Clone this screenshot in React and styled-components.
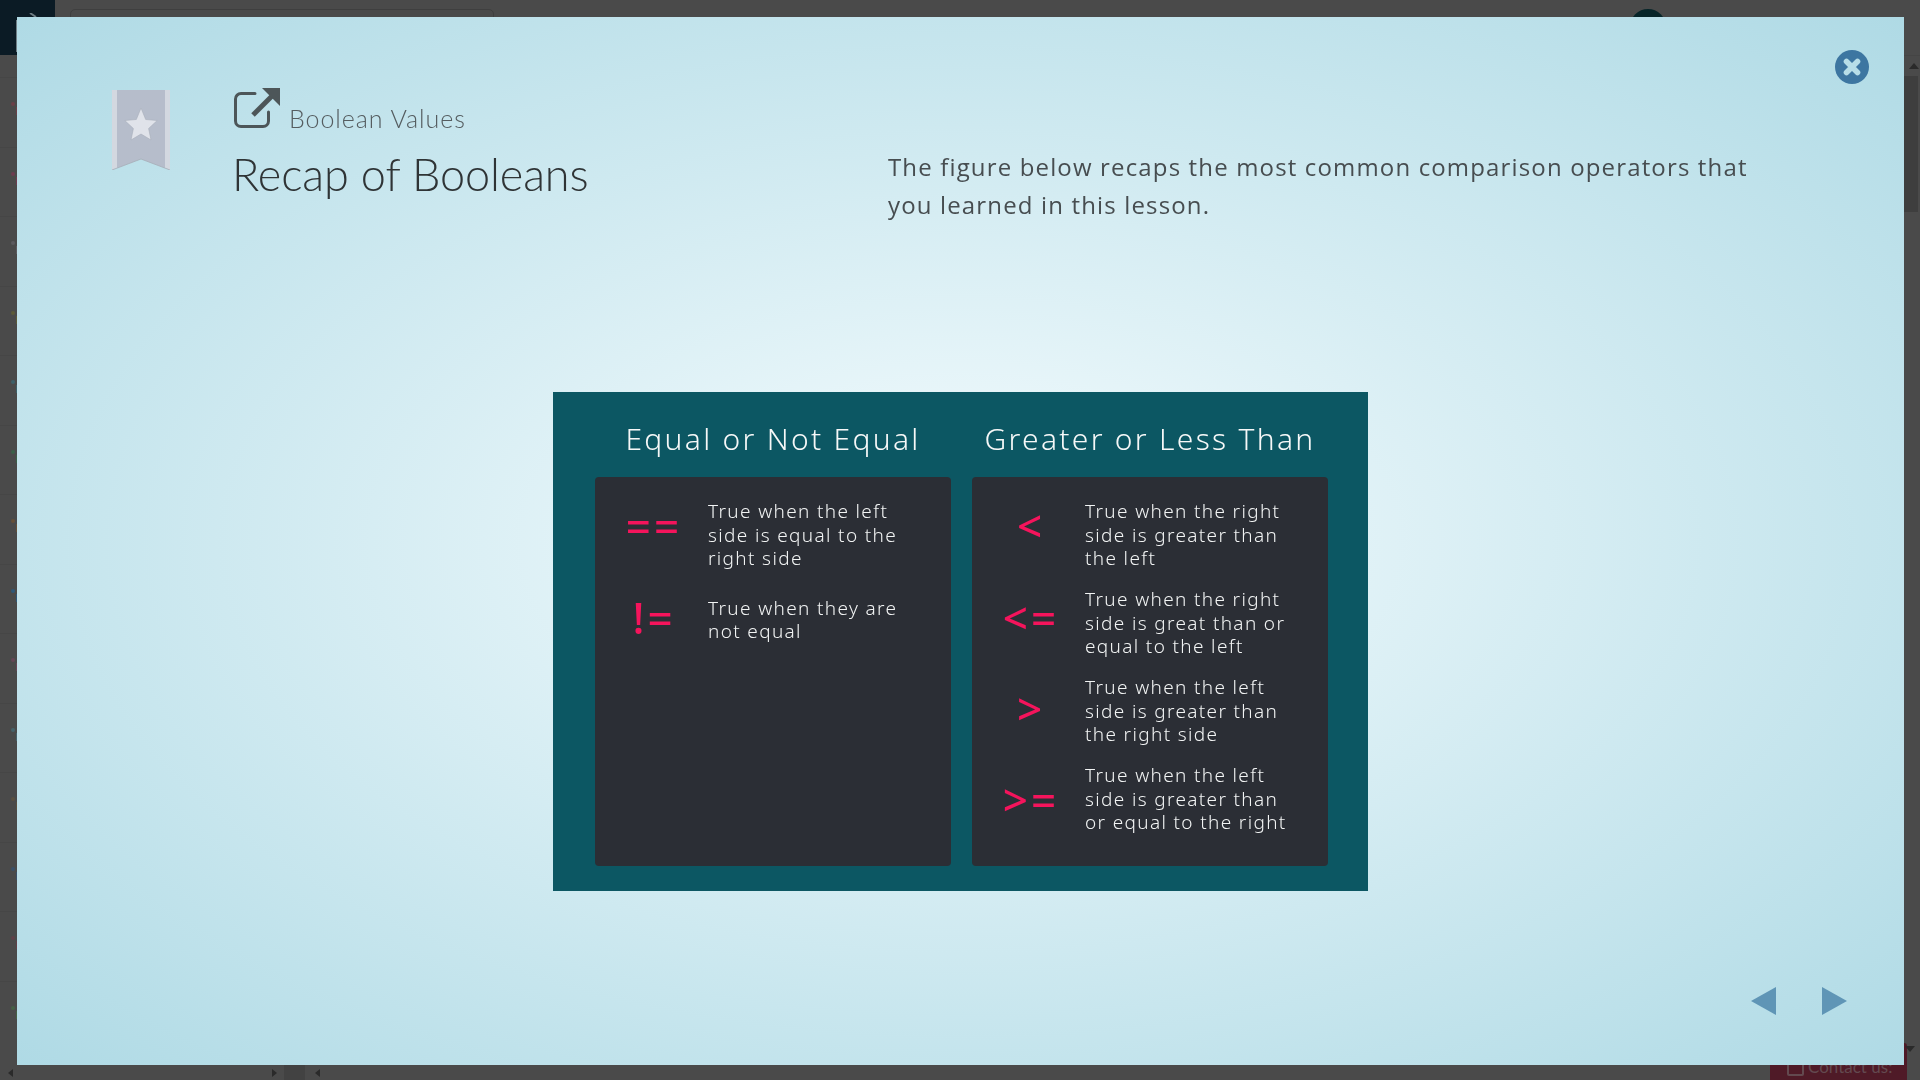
import React from "react";
import styled, { createGlobalStyle } from "styled-components";

const GlobalStyle = createGlobalStyle`
  html, body {
    margin: 0;
    height: 100%;
    overflow: hidden;
    background: #4a4a4a;
    font-family: "Open Sans", "Liberation Sans", sans-serif;
  }
`;

// top = how far the operator sits below the top of its row
const leftRows = [
  { op: "==", top: 2, lines: ["True when the left", "side is equal to the", "right side"] },
  { op: "!=", top: -3, lines: ["True when they are", "not equal"] },
];

const rightRows = [
  { op: "<", top: 2, lines: ["True when the right", "side is greater than", "the left"] },
  { op: "<=", top: 6, lines: ["True when the right", "side is great than or", "equal to the left"] },
  { op: ">", top: 9, lines: ["True when the left", "side is greater than", "the right side"] },
  { op: ">=", top: 12, lines: ["True when the left", "side is greater than", "or equal to the right"] },
];

const railColors = [
  "#6b4048", "#6d3c50", "#5c5a5e", "#5c5a38", "#3d6068", "#3a6048", "#665038",
  "#2f5878", "#664656", "#46626a", "#5a5040", "#3a5068", "#604048", "#456045",
];

function Rows({ rows, gap }) {
  return (
    <Panel $gap={gap}>
      {rows.map((row) => (
        <Row key={row.op}>
          <Operator $top={row.top}>{row.op}</Operator>
          <Meaning>
            {row.lines.map((line) => (
              <div key={line}>{line}</div>
            ))}
          </Meaning>
        </Row>
      ))}
    </Panel>
  );
}

export default function App() {
  return (
    <Page>
      <GlobalStyle />
      <Backdrop>
        <SideBlock>
          <svg width="30" height="40" viewBox="0 0 30 40">
            <path d="M9 8 H2 V38 H8" fill="none" stroke="#6f7d84" strokeWidth="2" />
            <path d="M15 0 L21 4" fill="none" stroke="#6f7d84" strokeWidth="2" />
          </svg>
        </SideBlock>
        <SearchBox />
        <Avatar />
        <Rail>
          {railColors.map((color, i) => (
            <RailRow key={i}>
              <RailDot $color={color} />
              <RailBar $color={color} />
            </RailRow>
          ))}
        </Rail>
        <ContactTab>
          <ContactBox />
          Contact us:
        </ContactTab>
        <ScrollTrack>
          <ScrollUp />
          <ScrollThumb />
        </ScrollTrack>
        <ScrollDown />
        <BottomBar>
          <BarArrow $dir="left" />
          <BarArrow $dir="right" />
          <BarBlock />
          <BarArrow $dir="left" />
        </BottomBar>
      </Backdrop>

      <Modal>
        <CloseButton aria-label="Close">
          <svg width="34" height="34" viewBox="0 0 34 34">
            <circle cx="17" cy="17" r="17" fill="#3d76a1" />
            <path d="M11.5 11.5 L22.5 22.5 M22.5 11.5 L11.5 22.5" stroke="#b7dee8" strokeWidth="5.6" strokeLinecap="round" />
          </svg>
        </CloseButton>

        <Header>
          <Bookmark>
            <svg width="58" height="80" viewBox="0 0 58 80">
              <path d="M0 0 H58 V80 L29 69 L0 80 Z" fill="#d3d8e0" />
              <path d="M5 0 H53 V78 L29 69 L5 78 Z" fill="#b6bdcb" />
              <path d="M0 80 L29 69 L58 80" fill="none" stroke="#a5adb8" strokeWidth="0.8" />
              <path
                d="M29 18 L33.7 29.5 L45.2 30.5 L36.6 38.5 L39 50 L29 44 L19 50 L21.4 38.5 L12.8 30.5 L24.3 29.5 Z"
                fill="#e0e3ea"
                stroke="#a8aeba"
                strokeWidth="0.6"
                strokeLinejoin="round"
              />
            </svg>
          </Bookmark>
          <TitleBlock>
            <TopicLine>
              <svg width="46" height="40" viewBox="0 0 46 40">
                <path
                  d="M21 5.5 H7 A5.5 5.5 0 0 0 1.5 11 V33 A5.5 5.5 0 0 0 7 38.5 H29 A5.5 5.5 0 0 0 34.5 33 V24"
                  fill="none"
                  stroke="#4d5659"
                  strokeWidth="3"
                  strokeLinecap="round"
                />
                <path d="M19 27 L39 7" stroke="#4d5659" strokeWidth="5" />
                <path d="M28 0 H46 V18 Z" fill="#4d5659" />
              </svg>
              <Topic>Boolean Values</Topic>
            </TopicLine>
            <Title>Recap of Booleans</Title>
          </TitleBlock>
          <Description>
            The figure below recaps the most common comparison operators that you learned in this lesson.
          </Description>
        </Header>

        <FigureArea>
          <Figure>
            <Column>
              <ColumnHeading>Equal or Not Equal</ColumnHeading>
              <Rows rows={leftRows} gap={26} />
            </Column>
            <Column>
              <ColumnHeading>Greater or Less Than</ColumnHeading>
              <Rows rows={rightRows} gap={17.5} />
            </Column>
          </Figure>
        </FigureArea>

        <Pager>
          <PageArrow $dir="left" />
          <PageArrow $dir="right" />
        </Pager>
      </Modal>
    </Page>
  );
}

const Page = styled.div`
  width: 1920px;
  height: 1080px;
  overflow: hidden;
`;

const Backdrop = styled.div`
  position: relative;
  width: 1920px;
  height: 1080px;
  background: #4a4a4a;
`;

const SideBlock = styled.div`
  position: absolute;
  left: 0;
  top: 0;
  width: 55px;
  height: 55px;
  padding: 13px 0 0 15px;
  box-sizing: border-box;
  background: #0b1b25;
  line-height: 0;
`;

const SearchBox = styled.div`
  position: absolute;
  left: 70px;
  top: 9px;
  width: 422px;
  height: 30px;
  border: 1px solid #3f3f3f;
  border-radius: 5px;
`;

const Avatar = styled.div`
  position: absolute;
  left: 1630px;
  top: 9px;
  width: 36px;
  height: 36px;
  border-radius: 50%;
  background: #062529;
`;

const Rail = styled.div`
  position: absolute;
  left: 0;
  top: 77px;
  width: 17px;
`;

const RailRow = styled.div`
  position: relative;
  height: 69.5px;
  border-top: 1px solid #464646;
  box-sizing: border-box;
`;

const RailDot = styled.span`
  position: absolute;
  left: 11px;
  top: 24px;
  width: 4px;
  height: 4px;
  border-radius: 50%;
  background: ${(p) => p.$color};
`;

const RailBar = styled.span`
  position: absolute;
  left: 16px;
  top: 29px;
  width: 1px;
  height: 8px;
  background: ${(p) => p.$color};
`;

const ContactTab = styled.div`
  position: absolute;
  left: 1770px;
  top: 1043px;
  width: 137px;
  height: 37px;
  padding: 11px 0 0 38px;
  box-sizing: border-box;
  background: #4f1a27;
  border-radius: 3px 3px 0 0;
  color: #63494f;
  font: 17px/26px "Lato", sans-serif;
`;

const ContactBox = styled.span`
  position: absolute;
  left: 17px;
  top: 17px;
  width: 13px;
  height: 12px;
  border: 2px solid #63494f;
  border-radius: 2px;
`;

const ScrollTrack = styled.div`
  position: absolute;
  right: 0;
  top: 55px;
  width: 16px;
  height: 1000px;
  border-top: 1px solid #454545;
  box-sizing: border-box;
`;

const ScrollUp = styled.div`
  width: 0;
  height: 0;
  margin: 7px 0 0 5px;
  border-left: 5px solid transparent;
  border-right: 5px solid transparent;
  border-bottom: 6px solid #2a2a2a;
`;

const ScrollThumb = styled.div`
  width: 14px;
  height: 136px;
  margin-top: 7px;
  background: #3e3e3e;
`;

const ScrollDown = styled.div`
  position: absolute;
  right: 5px;
  top: 1046px;
  width: 0;
  height: 0;
  border-left: 5px solid transparent;
  border-right: 5px solid transparent;
  border-top: 6px solid #2a2a2a;
`;

const BottomBar = styled.div`
  position: absolute;
  left: 8px;
  right: 0;
  bottom: 0;
  height: 15px;
  display: flex;
  align-items: center;
`;

const BarArrow = styled.span`
  width: 0;
  height: 0;
  border-top: 4px solid transparent;
  border-bottom: 4px solid transparent;
  ${(p) => (p.$dir === "left" ? "border-right: 5px solid #2a2a2a;" : "border-left: 5px solid #2a2a2a;")}
  margin-right: ${(p) => (p.$dir === "left" ? "259px" : "0")};
`;

const BarBlock = styled.span`
  width: 21px;
  height: 15px;
  margin: 0 10px 0 7px;
  background: #424242;
`;

const Modal = styled.div`
  position: fixed;
  left: 17px;
  top: 17px;
  width: 1887px;
  height: 1048px;
  box-sizing: border-box;
  padding: 73px 0 0 95px;
  display: flex;
  flex-direction: column;
  background: radial-gradient(ellipse farthest-corner at 50% 50%, #f5fcfe 0%, #afdae5 100%);
`;

const CloseButton = styled.div`
  position: absolute;
  right: 35px;
  top: 33px;
  width: 34px;
  height: 34px;
  line-height: 0;
`;

const Header = styled.div`
  display: flex;
  align-items: flex-start;
  height: 302px;
`;

const Bookmark = styled.div`
  width: 58px;
  height: 80px;
  margin-right: 64px;
  line-height: 0;
`;

const TitleBlock = styled.div`
  width: 654px;
  margin-top: -2px;
`;

const TopicLine = styled.div`
  display: flex;
  align-items: flex-end;
  gap: 9px;
  height: 40px;
`;

const Topic = styled.span`
  margin-bottom: -3px;
  font-family: "Lato", sans-serif;
  font-weight: 300;
  font-size: 25px;
  line-height: 26px;
  color: #555d60;
  letter-spacing: 0.95px;
`;

const Title = styled.h1`
  margin: 20px 0 0 -2px;
  font-family: "Lato", sans-serif;
  font-weight: 300;
  font-size: 45px;
  line-height: 52px;
  color: #2f3436;
  letter-spacing: -0.1px;
`;

const Description = styled.p`
  margin: 58px 0 0 0;
  width: 880px;
  font-family: "Open Sans", sans-serif;
  font-size: 24px;
  line-height: 38px;
  letter-spacing: 1.15px;
  color: #474d50;
`;

const FigureArea = styled.div`
  display: flex;
  margin-left: 441px;
`;

const Figure = styled.div`
  width: 815px;
  height: 499px;
  box-sizing: border-box;
  padding: 0 40px 25px 42px;
  display: flex;
  gap: 21px;
  background: #0c5763;
`;

const Column = styled.div`
  width: 356px;
  display: flex;
  flex-direction: column;
`;

const ColumnHeading = styled.h2`
  margin: 0;
  height: 85px;
  font-family: "Noto Sans", sans-serif;
  font-weight: 300;
  font-size: 30px;
  line-height: 94px;
  letter-spacing: 2.3px;
  text-align: center;
  color: #f6f8f8;
`;

const Panel = styled.div`
  flex: 1;
  box-sizing: border-box;
  padding: 23px 0 0 5px;
  display: flex;
  flex-direction: column;
  gap: ${(p) => p.$gap}px;
  background: #2b2e35;
  border-radius: 4px;
`;

const Row = styled.div`
  display: grid;
  grid-template-columns: 108px 1fr;
`;

const Operator = styled.div`
  margin-top: ${(p) => p.$top}px;
  font-family: "Noto Sans", sans-serif;
  font-weight: 500;
  font-size: 44px;
  line-height: 46px;
  letter-spacing: 3px;
  text-align: center;
  color: #f5145c;
`;

const Meaning = styled.div`
  font-family: "Noto Sans", sans-serif;
  font-weight: 300;
  font-size: 19px;
  line-height: 23.5px;
  letter-spacing: 1.35px;
  color: #f2f4f4;
  white-space: nowrap;
`;

const Pager = styled.div`
  display: flex;
  justify-content: flex-end;
  gap: 46px;
  margin-top: 96px;
  padding-right: 57px;
`;

const PageArrow = styled.span`
  width: 0;
  height: 0;
  border-top: 14px solid transparent;
  border-bottom: 14px solid transparent;
  ${(p) => (p.$dir === "left" ? "border-right: 25px solid #5f95b6;" : "border-left: 25px solid #5f95b6;")}
`;
